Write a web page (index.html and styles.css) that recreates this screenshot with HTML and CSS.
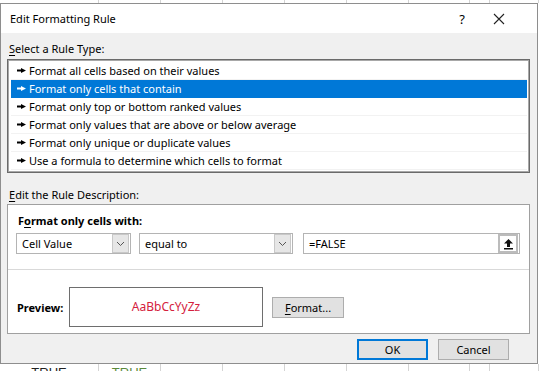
FILE: index.html
```html
<!DOCTYPE html>
<html>
<head>
  <title>Edit Formatting Rule</title>
  <link rel="stylesheet" href="styles.css">
</head>
<body>
  <div class="sheet-row sheet-top">
    <span></span><span></span><span></span><span></span><span></span><span></span><span></span><span></span><span></span>
  </div>

  <div class="dialog">
    <div class="titlebar">
      <span class="title">Edit Formatting Rule</span>
      <span class="help">?</span>
      <span class="close">
        <svg width="12" height="12" viewBox="0 0 12 12"><path d="M1 1L11 11M11 1L1 11" stroke="#222" stroke-width="1.1" fill="none"/></svg>
      </span>
    </div>

    <div class="dialog-body">
      <div class="group-label"><u>S</u>elect a Rule Type:</div>
      <ul class="rule-list">
        <li><svg class="arrow" width="9" height="7" viewBox="0 0 9 7"><path d="M0 2.5h5v2H0z M4 1L9 3.5L4 6z" fill="currentColor"/></svg>Format all cells based on their values</li>
        <li class="selected"><svg class="arrow" width="9" height="7" viewBox="0 0 9 7"><path d="M0 2.5h5v2H0z M4 1L9 3.5L4 6z" fill="currentColor"/></svg>Format only cells that contain</li>
        <li><svg class="arrow" width="9" height="7" viewBox="0 0 9 7"><path d="M0 2.5h5v2H0z M4 1L9 3.5L4 6z" fill="currentColor"/></svg>Format only top or bottom ranked values</li>
        <li><svg class="arrow" width="9" height="7" viewBox="0 0 9 7"><path d="M0 2.5h5v2H0z M4 1L9 3.5L4 6z" fill="currentColor"/></svg>Format only values that are above or below average</li>
        <li><svg class="arrow" width="9" height="7" viewBox="0 0 9 7"><path d="M0 2.5h5v2H0z M4 1L9 3.5L4 6z" fill="currentColor"/></svg>Format only unique or duplicate values</li>
        <li><svg class="arrow" width="9" height="7" viewBox="0 0 9 7"><path d="M0 2.5h5v2H0z M4 1L9 3.5L4 6z" fill="currentColor"/></svg>Use a formula to determine which cells to format</li>
      </ul>

      <div class="group-label desc-label"><u>E</u>dit the Rule Description:</div>
      <div class="desc-box">
        <div class="desc-top">
          <div class="desc-title">F<u>o</u>rmat only cells with:</div>
          <div class="criteria">
            <div class="combo combo-type">
              <span class="combo-text">Cell Value</span>
              <span class="drop"><svg width="9" height="6" viewBox="0 0 9 6"><path d="M1 1l3.5 3.5L8 1" stroke="#555" fill="none"/></svg></span>
            </div>
            <div class="combo combo-op">
              <span class="combo-text">equal to</span>
              <span class="drop"><svg width="9" height="6" viewBox="0 0 9 6"><path d="M1 1l3.5 3.5L8 1" stroke="#555" fill="none"/></svg></span>
            </div>
            <div class="combo ref-input">
              <span class="combo-text">=FALSE</span>
              <span class="ref-btn"><svg width="11" height="12" viewBox="0 0 11 12"><path d="M5.5 1L10 5.5H7V9H4V5.5H1z" fill="#111"/><rect x="1" y="10" width="9" height="1.5" fill="#111"/></svg></span>
            </div>
          </div>
        </div>
        <div class="preview-row">
          <span class="preview-label">Preview:</span>
          <div class="preview-box">AaBbCcYyZz</div>
          <button class="btn btn-format"><u>F</u>ormat...</button>
        </div>
      </div>

      <div class="actions">
        <button class="btn btn-ok">OK</button>
        <button class="btn">Cancel</button>
      </div>
    </div>
  </div>

  <div class="sheet-row sheet-bottom">
    <span>TRUE</span><span class="green">TRUE</span><span></span><span></span><span></span><span></span><span></span><span></span><span></span>
  </div>
</body>
</html>
```

FILE: styles.css
```css
/* Reset styles */
*,
*::before,
*::after {
  box-sizing: border-box;
  margin: 0;
  padding: 0;
}

body {
  width: 539px;
  height: 371px;
  overflow: hidden;
  background-color: #fff;
  font-family: "Noto Sans", "Open Sans", sans-serif;
  font-size: 11px;
  color: #000;
}

u {
  text-decoration-thickness: 1px;
  text-underline-offset: 2px;
}

/* Spreadsheet behind the dialog */
.sheet-row {
  display: grid;
  grid-template-columns: 99px 62px 62px 62px 62px 62px 61px 20px 1fr;
}

.sheet-row span {
  border-right: 1px solid #d4d4d4;
  text-align: center;
}

.sheet-top {
  height: 3px;
}

.sheet-bottom {
  height: 9px;
  line-height: 18px;
  overflow: hidden;
  font-family: "Liberation Sans", Arial, sans-serif;
  font-size: 13px;
  color: #222;
}

.sheet-bottom .green {
  color: #5b8a3c;
}

/* Dialog window */
.dialog {
  width: 538px;
  border: 1px solid #8e8e8e;
  background-color: #f0f0f0;
}

.titlebar {
  display: flex;
  align-items: center;
  height: 29px;
  background-color: #fff;
  padding-left: 9px;
  font-size: 11px;
}

.title {
  flex: 1;
}

.help {
  width: 20px;
  text-align: center;
  font-size: 13px;
  margin-right: 17px;
}

.close {
  display: flex;
  width: 20px;
  justify-content: center;
  margin-right: 28px;
}

.dialog-body {
  padding: 0 7px 3px 6px;
}

.group-label {
  height: 16px;
  line-height: 16px;
  margin-top: 8px;
  padding-left: 2px;
}

/* Rule type list */
.rule-list {
  list-style: none;
  margin-top: 2px;
  border: 1px solid #6a6a6a;
  box-shadow: inset 0 0 0 1px #a8a8a8;
  background-color: #fff;
  padding: 2px 2px 2px 3px;
}

.rule-list li {
  display: flex;
  align-items: center;
  height: 18px;
  padding-left: 6px;
  border-bottom: 1px solid #f2f2f2;
  white-space: nowrap;
}

.rule-list li.selected {
  background-color: #0078d7;
  color: #fff;
  border-bottom-color: #0078d7;
}

.arrow {
  margin-right: 3px;
  flex-shrink: 0;
}

.desc-label {
  margin-top: 14px;
  margin-bottom: 1px;
}

/* Rule description */
.desc-box {
  border: 1px solid #a0a0a0;
  background-color: #fff;
}

.desc-top {
  padding: 8px 8px 15px;
  border-bottom: 1px solid #d9d9d9;
}

.desc-title {
  font-weight: bold;
  line-height: 16px;
  padding-left: 2px;
}

.criteria {
  display: flex;
  gap: 8px;
  margin-top: 4px;
}

.combo {
  display: flex;
  align-items: center;
  height: 21px;
  border: 1px solid #b4b4b4;
  padding: 1px;
  background-color: #fff;
}

.combo-text {
  flex: 1;
  padding-left: 4px;
}

.combo-type {
  width: 115px;
}

.combo-op {
  width: 154px;
}

.ref-input {
  width: 217px;
  margin-left: 2px;
}

.drop {
  display: flex;
  align-items: center;
  justify-content: center;
  width: 17px;
  height: 19px;
  background-color: #e6e6e6;
  border: 1px solid #c8c8c8;
}

.ref-btn {
  display: flex;
  align-items: center;
  justify-content: center;
  width: 20px;
  height: 19px;
  background-color: #fff;
  border: 2px solid #bcbcbc;
}

.preview-row {
  display: flex;
  align-items: center;
  padding: 17px 0 6px 9px;
}

.preview-label {
  font-weight: bold;
  width: 52px;
}

.preview-box {
  width: 194px;
  height: 40px;
  border: 1px solid #6e6e6e;
  color: #d4213d;
  font-size: 12px;
  text-align: center;
  line-height: 38px;
}

/* Buttons */
.btn {
  font-family: inherit;
  font-size: 11px;
  color: #000;
  width: 71px;
  height: 21px;
  background-color: #e1e1e1;
  border: 1px solid #adadad;
}

.btn-format {
  width: 72px;
  margin-left: 9px;
}

.actions {
  display: flex;
  justify-content: flex-end;
  gap: 10px;
  margin-top: 5px;
  padding-right: 21px;
}

.btn-ok {
  border: 2px solid #0078d7;
}
```
